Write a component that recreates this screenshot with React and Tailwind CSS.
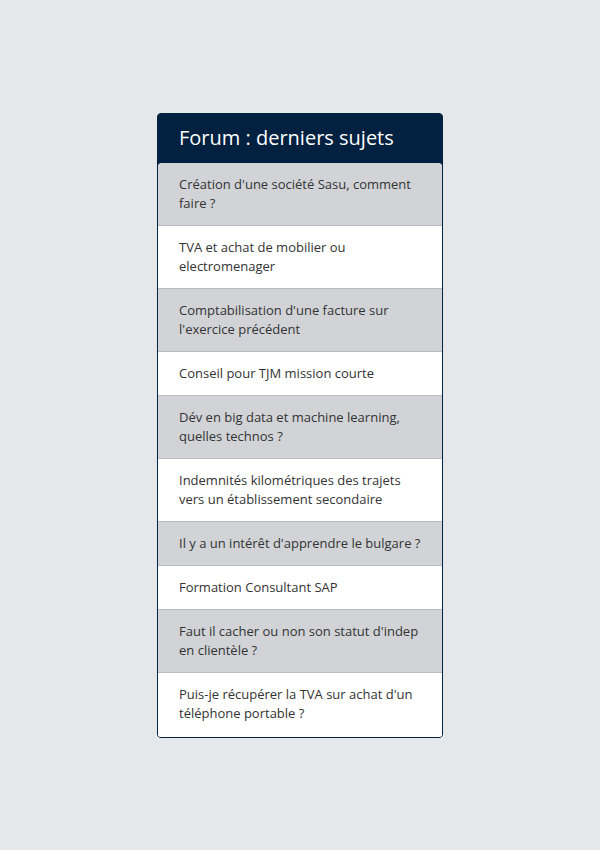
const topics = [
  "Création d'une société Sasu, comment faire ?",
  "TVA et achat de mobilier ou electromenager",
  "Comptabilisation d'une facture sur l'exercice précédent",
  "Conseil pour TJM mission courte",
  "Dév en big data et machine learning, quelles technos ?",
  "Indemnités kilométriques des trajets vers un établissement secondaire",
  "Il y a un intérêt d'apprendre le bulgare ?",
  "Formation Consultant SAP",
  "Faut il cacher ou non son statut d'indep en clientèle ?",
  "Puis-je récupérer la TVA sur achat d'un téléphone portable ?",
];

export default function App() {
  return (
    <div className="min-h-screen bg-[#e4e8eb] flex items-center justify-center font-['Open_Sans',sans-serif]">
      <div className="w-[286px] bg-[#02203f] border border-[#02203f] rounded-[4px] overflow-hidden">
        <h2 className="h-[49px] flex items-center px-[21px] text-white text-[20px]">
          Forum : derniers sujets
        </h2>
        <ul className="bg-white rounded-t-[4px] overflow-hidden">
          {topics.map((t, i) => (
            <li
              key={i}
              className={
                "px-[21px] pt-3 text-[13px] leading-[19px] text-[#333333] " +
                (i % 2 === 0 ? "bg-[#d1d3d7]" : "bg-white") +
                (i < topics.length - 1 ? " pb-3 border-b border-[#b9bcc0]" : " pb-[14px]")
              }
            >
              {t}
            </li>
          ))}
        </ul>
      </div>
    </div>
  );
}
